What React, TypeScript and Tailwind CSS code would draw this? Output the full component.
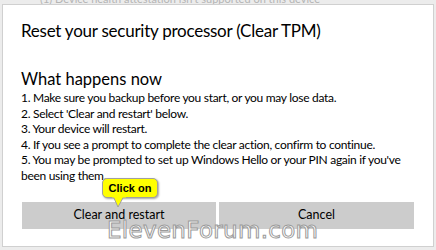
import React from "react";

export default function App() {
  const lines = [
    "1. Make sure you backup before you start, or you may lose data.",
    "2. Select 'Clear and restart' below.",
    "3. Your device will restart.",
    "4. If you see a prompt to complete the clear action, confirm to continue.",
    "5. You may be prompted to set up Windows Hello or your PIN again if you've",
    "been using them.",
  ];
  return (
    <div
      className="relative w-[436px] h-[250px] overflow-hidden bg-[#ececec]"
      style={{ fontFamily: 'Lato, "Noto Sans", sans-serif' }}
    >
      <div className="h-[4px] overflow-hidden pl-[40px] text-[11px] leading-[4px] text-[#b5b5b5]">
        <span className="relative top-[-3px]">(1) Device health attestation isn't supported on this device</span>
      </div>
      <div className="ml-[2px] w-[432px] h-[243px] bg-white border border-[#d0d0d0] pl-[18px] pr-[19px] text-black">
        <div className="pt-[14px] text-[17px] leading-[24px] tracking-[-0.25px]">
          Reset your security processor (Clear TPM)
        </div>
        <div className="mt-[25px] text-[16.5px] leading-[22px]">What happens now</div>
        <div className="text-[12px] leading-[15.6px] tracking-[-0.3px] whitespace-nowrap">
          {lines.map((l) => (
            <div key={l}>{l}</div>
          ))}
        </div>
        <div className="mt-[18px] flex gap-[3px] pl-[1px]">
          <div className="w-[194px] h-[27px] bg-[#cccccc] flex items-center justify-center text-[12.5px]">
            Clear and restart
          </div>
          <div className="w-[195px] h-[27px] bg-[#cccccc] flex items-center justify-center text-[12.5px]">
            Cancel
          </div>
        </div>
      </div>

      {/* Callout */}
      <div className="absolute left-[102px] top-[178px]">
        <div
          className="relative w-[56px] h-[20px] rounded-[5px] bg-[#ffff00] border border-[#a0a0a0] flex items-center justify-center text-[11px] font-bold shadow-[1px_1px_2px_rgba(0,0,0,0.35)]"
          style={{ fontFamily: '"Liberation Sans", Arial, sans-serif' }}
        >
          Click on
        </div>
        <svg className="absolute left-[10px] top-[18px]" width="14" height="12" viewBox="0 0 14 12">
          <path d="M1 0 L6 11 L12 0 Z" fill="#ffff00" stroke="#a0a0a0" strokeWidth="1" />
          <path d="M0 0 L14 0" stroke="#ffff00" strokeWidth="3" />
        </svg>
      </div>

      {/* Watermark */}
      <div
        className="absolute left-[107px] top-[217px] text-[23px] leading-[26px] tracking-[0.3px] text-white [-webkit-text-stroke:1px_#9a9a9a]"
        style={{ fontFamily: '"DejaVu Sans", sans-serif' }}
      >
        ElevenForum.com
      </div>
    </div>
  );
}
